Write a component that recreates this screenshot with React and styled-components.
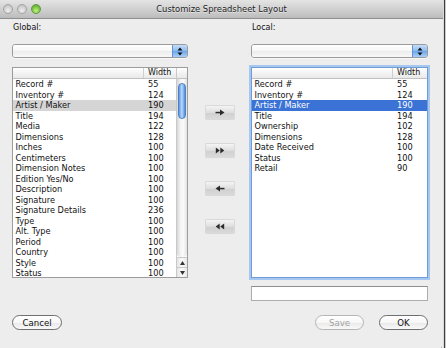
import React from "react";
import styled, { createGlobalStyle } from "styled-components";

const GlobalStyle = createGlobalStyle`
  body {
    margin: 0;
    background: #cfcfcf;
    font-family: "DejaVu Sans", "Liberation Sans", sans-serif;
  }
`;

const globalFields = [
  ["Record #", 55],
  ["Inventory #", 124],
  ["Artist / Maker", 190],
  ["Title", 194],
  ["Media", 122],
  ["Dimensions", 128],
  ["Inches", 100],
  ["Centimeters", 100],
  ["Dimension Notes", 100],
  ["Edition Yes/No", 100],
  ["Description", 100],
  ["Signature", 100],
  ["Signature Details", 236],
  ["Type", 100],
  ["Alt. Type", 100],
  ["Period", 100],
  ["Country", 100],
  ["Style", 100],
  ["Status", 100],
];

const localFields = [
  ["Record #", 55],
  ["Inventory #", 124],
  ["Artist / Maker", 190],
  ["Title", 194],
  ["Ownership", 102],
  ["Dimensions", 128],
  ["Date Received", 100],
  ["Status", 100],
  ["Retail", 90],
];

function Stepper() {
  return (
    <StepperBox>
      <svg width="6" height="9" viewBox="0 0 6 9">
        <polygon points="3,0.5 5.5,3.5 0.5,3.5" fill="#111" />
        <polygon points="0.5,5.5 5.5,5.5 3,8.5" fill="#111" />
      </svg>
    </StepperBox>
  );
}

function MoveIcon({ kind }) {
  return (
    <svg width="10" height="7" viewBox="0 0 10 7">
      {kind === "right" && (
        <>
          <rect x="0.5" y="2.8" width="5" height="1.5" fill="#2b2b2b" />
          <polygon points="5,0.6 9.5,3.5 5,6.4" fill="#2b2b2b" />
        </>
      )}
      {kind === "allRight" && (
        <>
          <polygon points="0.8,0.6 4.8,3.5 0.8,6.4" fill="#2b2b2b" />
          <polygon points="5.3,0.6 9.3,3.5 5.3,6.4" fill="#2b2b2b" />
        </>
      )}
      {kind === "left" && (
        <>
          <rect x="4.5" y="2.8" width="5" height="1.5" fill="#2b2b2b" />
          <polygon points="5,0.6 0.5,3.5 5,6.4" fill="#2b2b2b" />
        </>
      )}
      {kind === "allLeft" && (
        <>
          <polygon points="4.7,0.6 0.7,3.5 4.7,6.4" fill="#2b2b2b" />
          <polygon points="9.2,0.6 5.2,3.5 9.2,6.4" fill="#2b2b2b" />
        </>
      )}
    </svg>
  );
}

function FieldTable({ rows, nameWidth, selected, focused, scroll }) {
  return (
    <Table focused={focused}>
      <List>
        <HeaderRow nameWidth={nameWidth}>
          <HeaderCell divider />
          <HeaderCell>Width</HeaderCell>
        </HeaderRow>
        {rows.map(([name, width], i) => (
          <Row
            key={name}
            nameWidth={nameWidth}
            selected={i === selected}
            focused={focused}
          >
            <NameCell>{name}</NameCell>
            <WidthCell>{width}</WidthCell>
          </Row>
        ))}
      </List>
      {scroll && (
        <Scrollbar>
          <ScrollHead />
          <Track>
            <Thumb />
          </Track>
          <ScrollArrow>
            <svg width="5" height="4" viewBox="0 0 5 4">
              <polygon points="2.5,0 5,4 0,4" fill="#333" />
            </svg>
          </ScrollArrow>
          <ScrollArrow>
            <svg width="5" height="4" viewBox="0 0 5 4">
              <polygon points="0,0 5,0 2.5,4" fill="#333" />
            </svg>
          </ScrollArrow>
        </Scrollbar>
      )}
    </Table>
  );
}

export default function App() {
  return (
    <>
      <GlobalStyle />
      <Desktop>
        <Window>
          <TitleBar>
            <Lights>
              <Light />
              <Light />
              <Light green />
            </Lights>
            <Title>Customize Spreadsheet Layout</Title>
            <span />
          </TitleBar>
          <Body>
            <Panes>
              <Pane>
                <Label>Global:</Label>
                <Popup>
                  <PopupField />
                  <Stepper />
                </Popup>
                <FieldTable
                  rows={globalFields}
                  nameWidth={131}
                  selected={2}
                  scroll
                />
              </Pane>
              <Mover>
                <MoveButton>
                  <MoveIcon kind="right" />
                </MoveButton>
                <MoveButton>
                  <MoveIcon kind="allRight" />
                </MoveButton>
                <MoveButton>
                  <MoveIcon kind="left" />
                </MoveButton>
                <MoveButton>
                  <MoveIcon kind="allLeft" />
                </MoveButton>
              </Mover>
              <Pane wide>
                <Label>Local:</Label>
                <Popup>
                  <PopupField />
                  <Stepper />
                </Popup>
                <FieldTable
                  rows={localFields}
                  nameWidth={141}
                  selected={2}
                  focused
                />
                <TextField />
              </Pane>
            </Panes>
            <Footer>
              <PillButton width={50}>Cancel</PillButton>
              <Spacer />
              <PillButton width={49} disabled>
                Save
              </PillButton>
              <PillButton width={49}>OK</PillButton>
            </Footer>
          </Body>
          <Grip>
            <svg width="8" height="8" viewBox="0 0 8 8">
              <path d="M8 1 L1 8 M8 4 L4 8 M8 7 L7 8" stroke="#9a9a9a" strokeWidth="0.8" />
            </svg>
          </Grip>
        </Window>
        <Backdrop />
      </Desktop>
    </>
  );
}

const Desktop = styled.div`
  display: flex;
  width: 446px;
  height: 348px;
  overflow: hidden;
`;

const Window = styled.div`
  position: relative;
  width: 443px;
  height: 348px;
  background: #ededed;
  display: flex;
  flex-direction: column;
`;

const Backdrop = styled.div`
  flex: 1;
  background: linear-gradient(
    to right,
    #dadada 0 1px,
    #3d3d3d 1px 2px,
    #cbcbcb 2px
  );
`;

const TitleBar = styled.div`
  height: 19px;
  box-sizing: border-box;
  display: grid;
  grid-template-columns: 1fr auto 1fr;
  align-items: center;
  background: linear-gradient(#e4e4e4, #cfcfcf 55%, #bcbcbc);
  border-bottom: 1px solid #8e8e8e;
`;

const Lights = styled.div`
  display: flex;
  gap: 4px;
  padding-left: 3px;
`;

const Light = styled.div`
  width: 10px;
  height: 10px;
  border-radius: 50%;
  box-sizing: border-box;
  border: 1px solid ${(p) => (p.green ? "#5e9a3c" : "#a3a3a3")};
  background: ${(p) =>
    p.green
      ? "radial-gradient(circle at 50% 70%, #c6f08a, #7cc443 55%, #4f9a2b)"
      : "radial-gradient(circle at 50% 70%, #eeeeee, #cfcfcf 60%, #b5b5b5)"};
`;

const Title = styled.div`
  font-size: 8.4px;
  color: #1e1e1e;
  text-shadow: 0 1px 0 rgba(255, 255, 255, 0.5);
  white-space: nowrap;
`;

const Body = styled.div`
  flex: 1;
  display: flex;
  flex-direction: column;
  padding: 0 15px 0 12px;
`;

const Panes = styled.div`
  display: flex;
  align-items: flex-start;
`;

const Pane = styled.div`
  width: ${(p) => (p.wide ? 177 : 176)}px;
  display: flex;
  flex-direction: column;
`;

const Label = styled.div`
  margin-top: 4px;
  padding-left: 1px;
  font-size: 8px;
  line-height: 10px;
  color: #111;
`;

const Popup = styled.div`
  margin-top: 11px;
  height: 14px;
  box-sizing: border-box;
  display: flex;
  border: 1px solid #9b9b9b;
  border-radius: 3px;
  overflow: hidden;
  box-shadow: 0 1px 0 rgba(255, 255, 255, 0.6);
`;

const PopupField = styled.div`
  flex: 1;
  background: linear-gradient(#ffffff, #f6f6f6 50%, #ececec 51%, #f8f8f8);
`;

const StepperBox = styled.div`
  width: 14px;
  display: flex;
  align-items: center;
  justify-content: center;
  border-left: 1px solid #6b8fc7;
  background: linear-gradient(#c6ddf8, #8dbbf0 50%, #6aa5ec 51%, #a9d0fa);
`;

const Table = styled.div`
  margin-top: 9px;
  height: 211px;
  box-sizing: border-box;
  display: flex;
  background: #fff;
  border: 1px solid ${(p) => (p.focused ? "#6f9bd6" : "#9c9c9c")};
  box-shadow: ${(p) => (p.focused ? "0 0 0 2px #a6c7ef" : "none")};
`;

const List = styled.div`
  flex: 1;
  display: flex;
  flex-direction: column;
`;

const HeaderRow = styled.div`
  height: 11px;
  box-sizing: border-box;
  display: grid;
  grid-template-columns: ${(p) => p.nameWidth}px 1fr;
  border-bottom: 1px solid #c2c2c2;
  background: linear-gradient(#ffffff, #f3f3f3 50%, #e9e9e9);
`;

const HeaderCell = styled.div`
  padding-left: 4px;
  font-size: 8px;
  line-height: 10px;
  color: #111;
  border-right: ${(p) => (p.divider ? "1px solid #cfcfcf" : "none")};
`;

const Row = styled.div`
  height: 10.5px;
  display: grid;
  grid-template-columns: ${(p) => p.nameWidth}px 1fr;
  font-size: 8.2px;
  line-height: 10.5px;
  white-space: nowrap;
  color: ${(p) => (p.selected && p.focused ? "#fff" : "#111")};
  background: ${(p) =>
    p.selected ? (p.focused ? "#3b72d6" : "#d5d5d5") : "transparent"};
`;

const NameCell = styled.div`
  padding-left: 2.5px;
`;

const WidthCell = styled.div`
  padding-left: 4px;
`;

const Scrollbar = styled.div`
  width: 10px;
  display: flex;
  flex-direction: column;
  border-left: 1px solid #c9c9c9;
`;

const ScrollHead = styled.div`
  height: 11px;
  box-sizing: border-box;
  border-bottom: 1px solid #c2c2c2;
  background: linear-gradient(#ffffff, #f3f3f3 50%, #e9e9e9);
`;

const Track = styled.div`
  flex: 1;
  padding-top: 4px;
  background: linear-gradient(
    to right,
    #d6d6d6,
    #f4f4f4 35%,
    #fafafa 65%,
    #e2e2e2
  );
  border-bottom-left-radius: 4px;
  border-bottom-right-radius: 4px;
`;

const Thumb = styled.div`
  width: 8px;
  height: 36px;
  margin: 0 auto;
  box-sizing: border-box;
  border-radius: 4px;
  border: 1px solid #4f7fc4;
  background: linear-gradient(
    to right,
    #5d95e0,
    #b8d8fa 45%,
    #9ec9f6 60%,
    #4f8bdc
  );
`;

const ScrollArrow = styled.div`
  height: 9px;
  display: flex;
  align-items: center;
  justify-content: center;
  border-top: 1px solid #c9c9c9;
  background: linear-gradient(to right, #e4e4e4, #fafafa 50%, #e8e8e8);
`;

const Mover = styled.div`
  width: 63px;
  box-sizing: border-box;
  padding: 87px 0 0 18px;
  display: flex;
  flex-direction: column;
  gap: 25px;
`;

const MoveButton = styled.div`
  width: 28px;
  height: 13px;
  display: flex;
  align-items: center;
  justify-content: center;
  background: linear-gradient(#f4f4f4, #dedede 50%, #cfcfcf 51%, #dadada);
  box-shadow: 0 0 0 0.5px #c4c4c4;
`;

const TextField = styled.div`
  margin-top: 8px;
  height: 15px;
  box-sizing: border-box;
  background: #fff;
  border: 1px solid #adadad;
  border-top-color: #8d8d8d;
`;

const Footer = styled.div`
  margin-top: 14px;
  display: flex;
  align-items: center;
  gap: 15px;
`;

const Spacer = styled.div`
  flex: 1;
`;

const PillButton = styled.div`
  width: ${(p) => p.width}px;
  height: 15px;
  box-sizing: border-box;
  display: flex;
  align-items: center;
  justify-content: center;
  border-radius: 8px;
  border: 1px solid ${(p) => (p.disabled ? "#b5b5b5" : "#6f6f6f")};
  background: linear-gradient(#ffffff, #f7f7f7 50%, #e9e9e9 51%, #f9f9f9);
  font-size: 8.6px;
  color: ${(p) => (p.disabled ? "#a3a3a3" : "#111")};
`;

const Grip = styled.div`
  position: absolute;
  right: 1px;
  bottom: 1px;
  width: 8px;
  height: 8px;
`;
